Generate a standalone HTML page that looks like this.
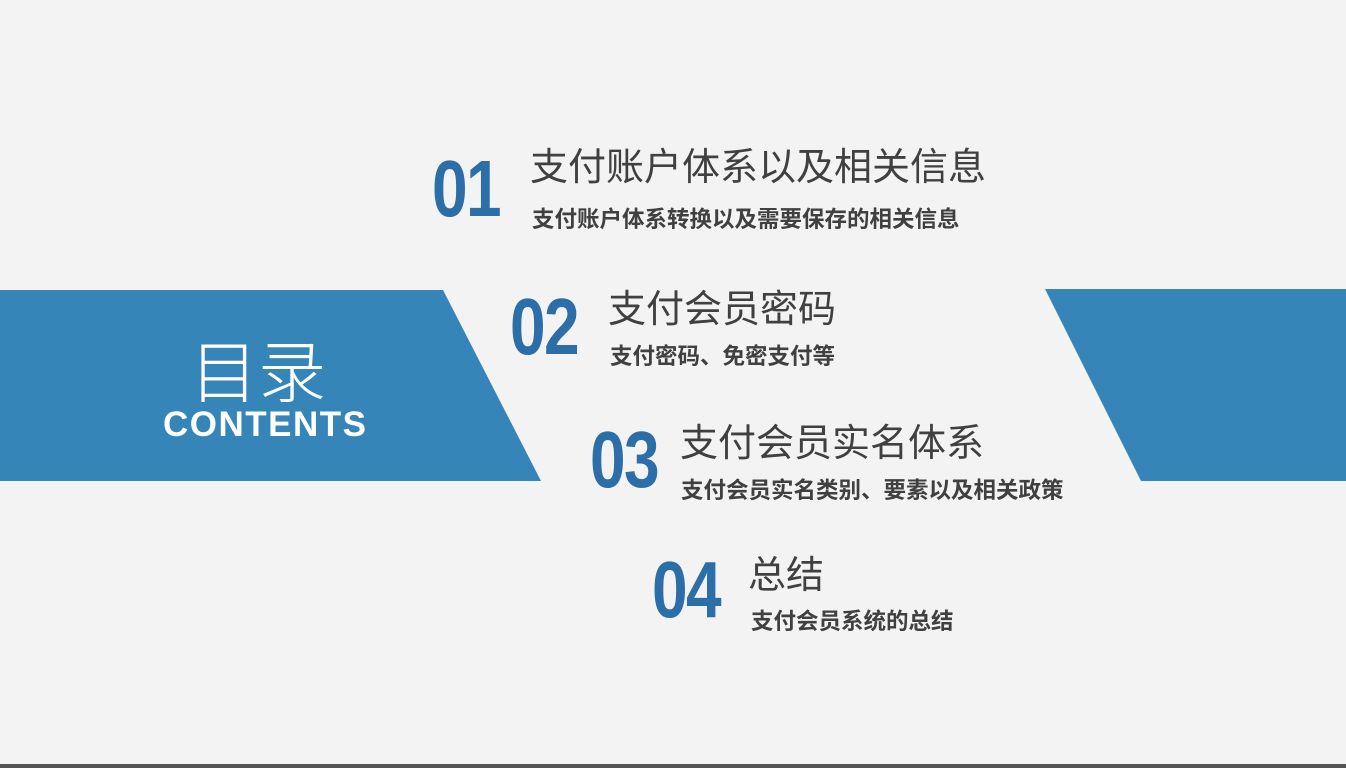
<!DOCTYPE html>
<html><head><meta charset="utf-8"><style>
body{margin:0;width:1346px;height:768px;background:#f3f3f3;position:relative;overflow:hidden;font-family:"Liberation Sans","Noto Sans CJK SC",sans-serif}
.n{position:absolute;font-family:"Liberation Sans",sans-serif;font-weight:bold;font-size:80px;color:#2b6ea8;transform:scaleX(0.8);transform-origin:left top;line-height:1;letter-spacing:-2px}
.t{position:absolute;font-size:38px;color:#404040;line-height:1;white-space:nowrap}
.s{position:absolute;font-size:22.5px;color:#404040;line-height:1;white-space:nowrap;font-weight:bold;letter-spacing:0px}
</style></head><body>
<svg width="1346" height="768" style="position:absolute;left:0;top:0">
<polygon points="0,290 443,290 541,481 0,481" fill="#3585b9"/>
<polygon points="1045,289 1346,289 1346,481 1141,481" fill="#3585b9"/>
<rect x="0" y="764" width="1346" height="4" fill="#555"/>
</svg>
<div style="position:absolute;left:190px;top:334px;font-size:68px;color:#fff;line-height:1;font-family:'Noto Sans CJK SC',sans-serif;font-weight:300">目录</div>
<div style="position:absolute;left:163px;top:407px;font-size:35px;font-weight:bold;color:#fff;line-height:1;letter-spacing:1.5px">CONTENTS</div>

<div class="n" style="left:432px;top:149px">01</div>
<div class="t" style="left:530px;top:149px">支付账户体系以及相关信息</div>
<div class="s" style="left:532px;top:209px">支付账户体系转换以及需要保存的相关信息</div>

<div class="n" style="left:510px;top:287px">02</div>
<div class="t" style="left:608px;top:291px">支付会员密码</div>
<div class="s" style="left:610px;top:346px">支付密码、免密支付等</div>

<div class="n" style="left:590px;top:420px">03</div>
<div class="t" style="left:680px;top:425px">支付会员实名体系</div>
<div class="s" style="left:681px;top:480px">支付会员实名类别、要素以及相关政策</div>

<div class="n" style="left:652px;top:550px">04</div>
<div class="t" style="left:748px;top:557px">总结</div>
<div class="s" style="left:751px;top:611px">支付会员系统的总结</div>
</body></html>
